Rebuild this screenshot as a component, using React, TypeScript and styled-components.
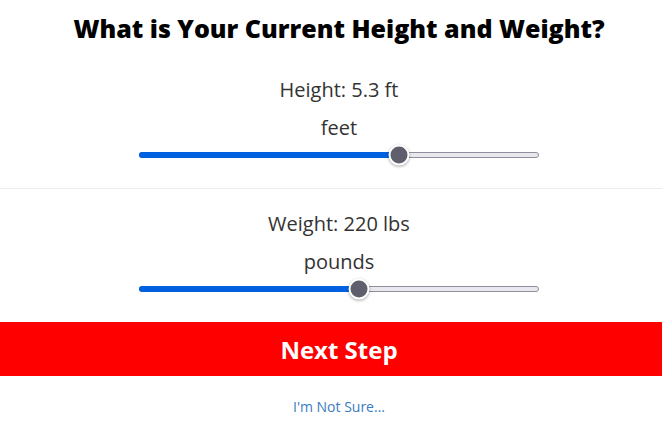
import React, { useState } from "react";
import styled, { createGlobalStyle } from "styled-components";

const Global = createGlobalStyle`
  html, body { margin: 0; padding: 0; background: #fff; overflow: hidden; }
  body { font-family: "Open Sans", "Liberation Sans", sans-serif; color: #333; }
`;

const Page = styled.div`
  width: 678px;
  display: flex;
  flex-direction: column;
`;

const Title = styled.h1`
  margin: 0;
  padding-top: 11px;
  height: 48px;
  box-sizing: border-box;
  text-align: center;
  font-size: 25px;
  font-weight: 800;
  line-height: 34px;
  color: #000;
`;

const Section = styled.section<{ $divider?: boolean }>`
  display: flex;
  flex-direction: column;
  align-items: center;
  padding: ${(p) => (p.$divider ? "21px 0 30px" : "28px 0 30px")};
  border-top: ${(p) => (p.$divider ? "1px solid #ececec" : "none")};
`;

const Label = styled.div`
  font-size: 20px;
  line-height: 28px;
  color: #333;
`;

const Unit = styled.div`
  margin-top: 10px;
  font-size: 20px;
  line-height: 28px;
  color: #333;
`;

const Track = styled.div`
  position: relative;
  margin-top: 10px;
  width: 400px;
  height: 6px;
  box-sizing: border-box;
  border: 1px solid #8f8f9d;
  border-radius: 3px;
  background: #e9e8ee;
`;

const Fill = styled.div`
  position: absolute;
  left: -1px;
  top: -1px;
  bottom: -1px;
  background: #0060df;
  border-radius: 3px;
`;

const Thumb = styled.div`
  position: absolute;
  top: 50%;
  width: 17px;
  height: 17px;
  border-radius: 50%;
  background: #5f5e6d;
  border: 2px solid #fff;
  box-shadow: 0 1px 3px rgba(0, 0, 0, 0.35);
  transform: translate(-50%, -50%);
`;

const NextButton = styled.button`
  display: block;
  width: 100%;
  height: 54px;
  border: none;
  margin: 0;
  background: #ff0000;
  color: #fff;
  font-family: "Open Sans", "Liberation Sans", sans-serif;
  font-size: 24px;
  font-weight: 700;
  cursor: pointer;
`;

const NotSure = styled.a`
  display: block;
  margin-top: 20px;
  text-align: center;
  font-size: 14px;
  line-height: 22px;
  color: #3a7cc0;
  text-decoration: none;
`;

type SliderProps = { percent: number };

const Slider = ({ percent }: SliderProps) => (
  <Track>
    <Fill style={{ width: `${percent}%` }} />
    <Thumb style={{ left: `${percent}%` }} />
  </Track>
);

export default function App() {
  const [h] = useState(65);
  const [w] = useState(55);
  return (
    <Page>
      <Global />
      <Title>What is Your Current Height and Weight?</Title>
      <Section>
        <Label>Height: 5.3 ft</Label>
        <Unit>feet</Unit>
        <Slider percent={h} />
      </Section>
      <Section $divider>
        <Label>Weight: 220 lbs</Label>
        <Unit>pounds</Unit>
        <Slider percent={w} />
      </Section>
      <NextButton>Next Step</NextButton>
      <NotSure href="#">I'm Not Sure...</NotSure>
    </Page>
  );
}
